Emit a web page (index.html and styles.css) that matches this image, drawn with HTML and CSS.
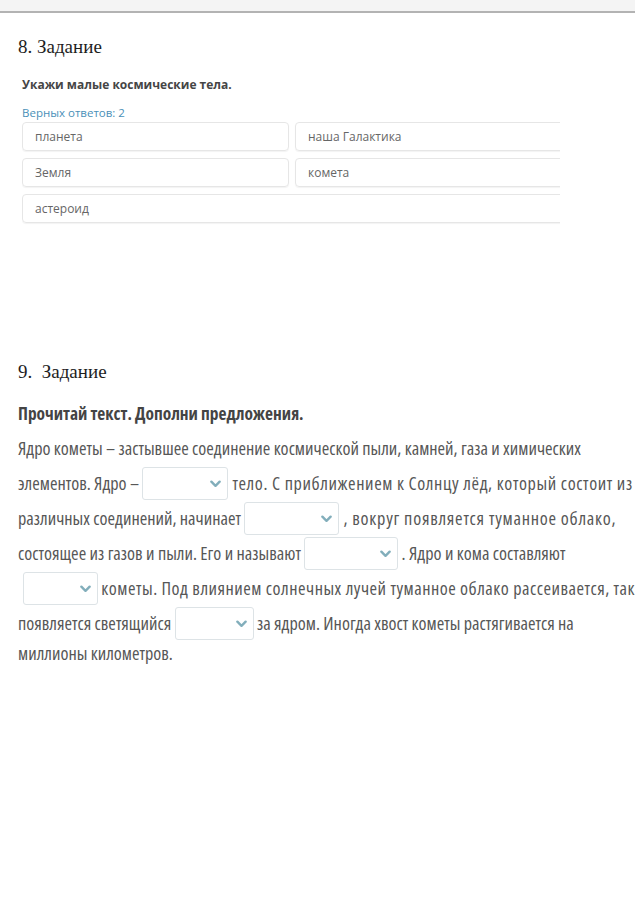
FILE: index.html
```html
<!DOCTYPE html>
<html lang="ru">
<head>
<meta charset="utf-8">
<link rel="stylesheet" href="styles.css">
</head>
<body>
<div class="topbar"></div>

<section class="task task8">
  <h2 class="task-title">8. Задание</h2>
  <p class="prompt">Укажи малые космические тела.</p>
  <p class="hint">Верных ответов: 2</p>
  <div class="options-clip">
    <div class="options">
      <div class="opt">планета</div>
      <div class="opt">наша Галактика</div>
      <div class="opt">Земля</div>
      <div class="opt">комета</div>
      <div class="opt opt-wide">астероид</div>
    </div>
  </div>
</section>

<section class="task task9">
  <h2 class="task-title">9.&nbsp; Задание</h2>
  <p class="prompt9">Прочитай текст. Дополни предложения.</p>
  <div class="text">
    <div class="line">Ядро кометы – застывшее соединение космической пыли, камней, газа и химических</div>
    <div class="line">элементов. Ядро – <span class="dd w86"><svg viewBox="0 0 12 8"><path d="M1.5 1.5 L6 6 L10.5 1.5"/></svg></span><span class="sp-a"> тело. С приближением к Солнцу лёд, который состоит из</span></div>
    <div class="line">различных соединений, начинает <span class="dd w95"><svg viewBox="0 0 12 8"><path d="M1.5 1.5 L6 6 L10.5 1.5"/></svg></span><span class="sp-b"> , вокруг появляется туманное облако,</span></div>
    <div class="line">состоящее из газов и пыли. Его и называют <span class="dd w94"><svg viewBox="0 0 12 8"><path d="M1.5 1.5 L6 6 L10.5 1.5"/></svg></span> . Ядро и кома составляют</div>
    <div class="line"><span class="dd w78 first"><svg viewBox="0 0 12 8"><path d="M1.5 1.5 L6 6 L10.5 1.5"/></svg></span><span class="sp-c"> кометы. Под влиянием солнечных лучей туманное облако рассеивается, так</span></div>
    <div class="line">появляется светящийся <span class="dd w79"><svg viewBox="0 0 12 8"><path d="M1.5 1.5 L6 6 L10.5 1.5"/></svg></span> за ядром. Иногда хвост кометы растягивается на</div>
    <div class="line last">миллионы километров.</div>
  </div>
</section>
</body>
</html>
```

FILE: styles.css
```css
html, body {
  margin: 0;
  padding: 0;
  background: #ffffff;
  overflow: hidden;
  width: 635px;
}

.topbar {
  height: 11px;
  background: #f4f4f4;
  border-bottom: 2px solid #b3b3b3;
}

.task {
  padding-left: 18px;
}

.task-title {
  font-family: "Liberation Serif", serif;
  font-weight: normal;
  font-size: 19px;
  color: #1e1e1e;
  margin: 0;
  line-height: 22px;
}

.task8 {
  padding-top: 23px;
  height: 326px;
}

.prompt {
  font-family: "Open Sans", sans-serif;
  font-weight: 700;
  font-size: 12px;
  color: #454545;
  margin: 19px 0 0 4px;
  line-height: 16px;
}

.hint {
  font-family: "Open Sans", sans-serif;
  font-size: 11.5px;
  color: #4a90b8;
  margin: 13px 0 0 4px;
  line-height: 14px;
}

.options-clip {
  margin-top: 2px;
  margin-left: 4px;
  width: 538px;
  overflow: hidden;
  padding-bottom: 2px;
}

.options {
  width: 580px;
  display: grid;
  grid-template-columns: 267px 1fr;
  column-gap: 6px;
  row-gap: 7px;
}

.opt {
  height: 27px;
  border: 1px solid #e6e6e6;
  border-radius: 4px;
  box-shadow: 0 1px 1px rgba(0,0,0,0.05);
  font-family: "Open Sans", sans-serif;
  font-size: 12px;
  color: #666;
  line-height: 27px;
  padding-left: 12px;
}

.opt-wide {
  grid-column: 1 / span 2;
}

.task9 .task-title {
  line-height: 20px;
}

.prompt9 {
  font-family: "Open Sans", sans-serif;
  font-stretch: 75%;
  font-weight: 700;
  font-size: 17.4px;
  color: #444;
  margin: 20px 0 0 0;
  line-height: 22px;
  white-space: nowrap;
}

.text {
  margin-top: 7px;
  font-family: "Open Sans", sans-serif;
  font-stretch: 75%;
  font-size: 18.2px;
  color: #575757;
  white-space: nowrap;
}

.line {
  height: 35px;
  line-height: 35px;
  display: flex;
  align-items: center;
  white-space: pre;
}

.line.last {
  height: 25px;
}

.sp-a { letter-spacing: 0.6px; }
.sp-b { letter-spacing: 0.75px; }
.sp-c { letter-spacing: 0.5px; }

.dd {
  display: inline-flex;
  align-items: center;
  justify-content: flex-end;
  height: 33px;
  border: 1px solid #dde3e6;
  border-radius: 3px;
  box-sizing: border-box;
  padding-right: 6px;
  background: #fff;
}

.dd svg {
  width: 11px;
  height: 8px;
  fill: none;
  stroke: #82aebb;
  stroke-width: 2.6;
  stroke-linecap: round;
  stroke-linejoin: round;
}

.dd.first { margin-left: 5px; }
.w86 { width: 86px; }
.w95 { width: 95px; }
.w94 { width: 94px; }
.w78 { width: 78px; }
.w79 { width: 79px; }
```
